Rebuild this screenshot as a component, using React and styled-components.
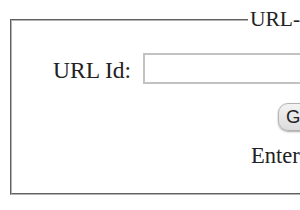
import React, {useState} from 'react';
import styled, {createGlobalStyle} from "styled-components";

const GlobalStyle = createGlobalStyle`
html, body {
margin: 0;
padding: 0;
background: #ffffff;
}
body {
font-family: "Liberation Serif", "Times New Roman", serif;
color: #222222;
}
`

const App = () => {
    const [urlId, setUrlId] = useState("")
    return (
        <Page>
            <GlobalStyle/>
            <Frame>
                <Legend>URL-Shortener</Legend>
                <Content>
                    <FieldRow>
                        <Label htmlFor="url-id">URL Id:</Label>
                        <TextInput id="url-id" value={urlId} onChange={e => setUrlId(e.target.value)}/>
                    </FieldRow>
                    <ButtonRow>
                        <GoButton>Go</GoButton>
                    </ButtonRow>
                    <Message>Enter a URL Id to open the link</Message>
                </Content>
            </Frame>
        </Page>
    );
};

const Page = styled.div`
width: 100vw;
height: 100vh;
box-sizing: border-box;
padding: 8px 0 0 8px;
overflow: hidden;
`
const Frame = styled.fieldset`
box-sizing: border-box;
width: 640px;
min-width: 640px;
margin: 0 2px;
padding: 0;
border: 2px groove #b4b4b4;
`
const Legend = styled.legend`
margin-left: 236px;
padding: 0 2px;
font-size: 21.5px;
line-height: 23px;
white-space: nowrap;
`
const Content = styled.div`
display: flex;
flex-direction: column;
padding: 22px 0 25px 41px;
`
const FieldRow = styled.div`
display: flex;
align-items: center;
gap: 12px;
height: 31px;
`
const Label = styled.label`
font-size: 23.5px;
line-height: 26px;
padding-top: 2px;
`
const TextInput = styled.input`
box-sizing: border-box;
width: 360px;
height: 31px;
border: 2px solid #c2c2c2;
padding: 2px 6px;
font-size: 18px;
font-family: "Liberation Sans", Arial, sans-serif;
outline: none;
`
const ButtonRow = styled.div`
display: flex;
margin-top: 19px;
padding-left: 225px;
`
const GoButton = styled.button`
height: 28px;
padding: 0 8px 0 7px;
border: 1px solid #b3b3b3;
border-radius: 10px;
background: linear-gradient(#f3f3f3, #dcdcdc);
box-shadow: 0 1px 2px rgba(0,0,0,0.35);
font-family: "Liberation Sans", Arial, sans-serif;
font-size: 18.5px;
color: #222222;
`
const Message = styled.div`
margin-top: 12px;
padding-left: 198px;
font-size: 22.5px;
line-height: 25px;
white-space: nowrap;
`

export default App;
